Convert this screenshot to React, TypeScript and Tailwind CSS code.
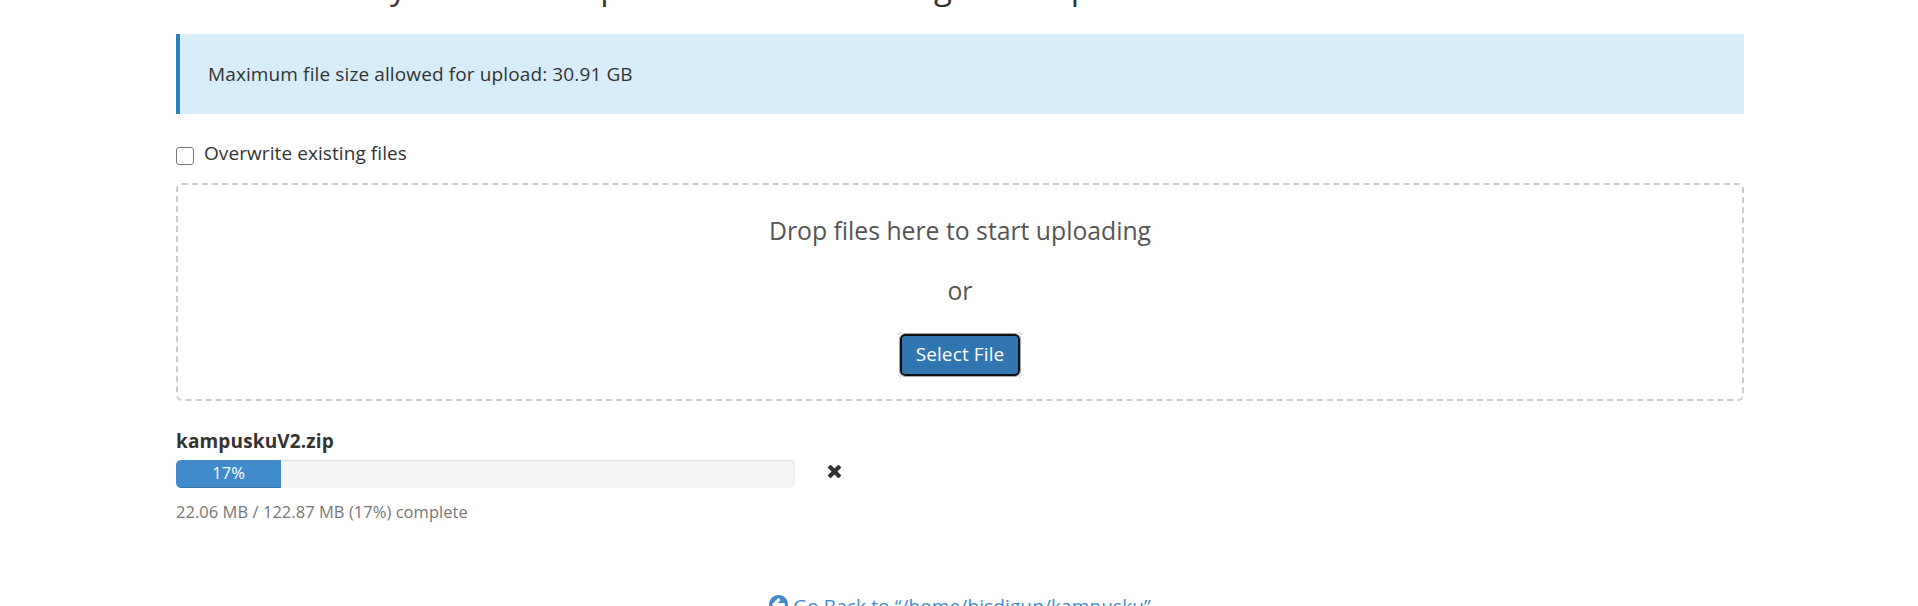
import React from "react";

function CloseIcon() {
  return (
    <svg width="13" height="13" viewBox="302 366 1188 1188" fill="#333333" className="block">
      <path d="M1490 1322q0 40-28 68l-136 136q-28 28-68 28t-68-28l-294-294-294 294q-28 28-68 28t-68-28l-136-136q-28-28-28-68t28-68l294-294-294-294q-28-28-28-68t28-68l136-136q28-28 68-28t68 28l294 294 294-294q28-28 68-28t68 28l136 136q28 28 28 68t-28 68l-294 294 294 294q28 28 28 68z" />
    </svg>
  );
}

function BackIcon() {
  return (
    <svg width="19" height="19" viewBox="128 128 1536 1536" fill="#428bca" className="mb-[4px] block shrink-0">
      <path d="M1408 960v-128q0-26-19-45t-45-19h-502l189-189q19-19 19-45t-19-45l-91-91q-18-18-45-18t-45 18l-362 362-91 91q-18 18-18 45t18 45l91 91 362 362q18 18 45 18t45-18l91-91q18-18 18-45t-18-45l-189-189h502q26 0 45-19t19-45zm256-64q0 209-103 385.5t-279.5 279.5-385.5 103-385.5-103-279.5-279.5-103-385.5 103-385.5 279.5-279.5 385.5-103 385.5 103 279.5 279.5 103 385.5z" />
    </svg>
  );
}

function FocusCorners() {
  return (
    <svg width="124" height="46" viewBox="0 0 124 46" fill="none" stroke="#5f82a6" className="pointer-events-none absolute -top-1 -left-1">
      <path d="M0.5 2.5 L2.5 0.5 M121.5 0.5 L123.5 2.5 M0.5 43.5 L2.5 45.5 M121.5 45.5 L123.5 43.5" strokeDasharray="1 1" />
    </svg>
  );
}

export default function App() {
  const percent = 17;
  return (
    <div className="h-[606px] overflow-hidden bg-white px-[176px] font-['Open_Sans',sans-serif] text-[#333333]">
      <div className="w-[1568px]">
        <div className="flex h-[34px] items-end overflow-hidden">
          <h1 className="mb-[27px] text-[33px] leading-[40px] tracking-[0.02px] whitespace-nowrap">
            Select the file you want to upload to “/home/bisdigun/kampusku”.
          </h1>
        </div>
        <div className="flex h-20 items-center border-l-4 border-[#2980b9] bg-[#d7edf9] pl-7 text-[19px] tracking-[0.12px]">
          Maximum file size allowed for upload: 30.91 GB
        </div>
        <label className="mt-[25px] flex h-[28px] items-center">
          <input type="checkbox" className="mt-[6px] mr-[10px] size-[18px] appearance-none rounded-[3px] border border-[#767676] bg-white" />
          <span className="mb-px text-[19px] leading-7 tracking-[0.08px]">Overwrite existing files</span>
        </label>
        <div className="mt-4 flex h-[218px] flex-col items-center rounded-[6px] border-2 border-dashed border-[#cccccc] text-[24.75px] text-[#555555]">
          <p className="mt-[29px] leading-[34px]">Drop files here to start uploading</p>
          <p className="mt-[26px] leading-[34px]">or</p>
          <button className="relative mt-[26px] flex h-[42px] w-[120px] items-center justify-center rounded-[5px] border-2 border-[#101010] bg-[#3276b1] pb-[2px] text-[19px] tracking-[0.12px] text-white outline-1 outline-[#aaaaaa]">
            Select File
            <FocusCorners />
          </button>
        </div>
        <div className="mt-[26px] text-[19px] leading-[28px] font-bold tracking-[0.14px]">kampuskuV2.zip</div>
        <div className="mt-[5px] flex">
          <div className="h-7 w-[619px] overflow-hidden rounded-[5px] bg-[#f5f5f5] shadow-[inset_0_1px_2px_rgba(0,0,0,0.1)]">
            <div
              className="h-full bg-[#428bca] text-center text-[16.5px] leading-[25px] text-white shadow-[inset_0_-1px_0_rgba(0,0,0,0.15)]"
              style={{ width: `${percent}%` }}
            >
              {percent}%
            </div>
          </div>
          <button aria-label="Cancel" className="mt-[5px] ml-[33px] h-[13px]">
            <CloseIcon />
          </button>
        </div>
        <div className="mt-[12px] text-[16.5px] leading-6 tracking-[0.04px] text-[#777777]">22.06 MB / 122.87 MB (17%) complete</div>
        <a className="mt-[68px] flex items-center justify-center gap-[5px] text-[19px] leading-[28px] tracking-[0.12px] text-[#428bca]">
          <BackIcon />
          Go Back to “/home/bisdigun/kampusku”
        </a>
      </div>
    </div>
  );
}
